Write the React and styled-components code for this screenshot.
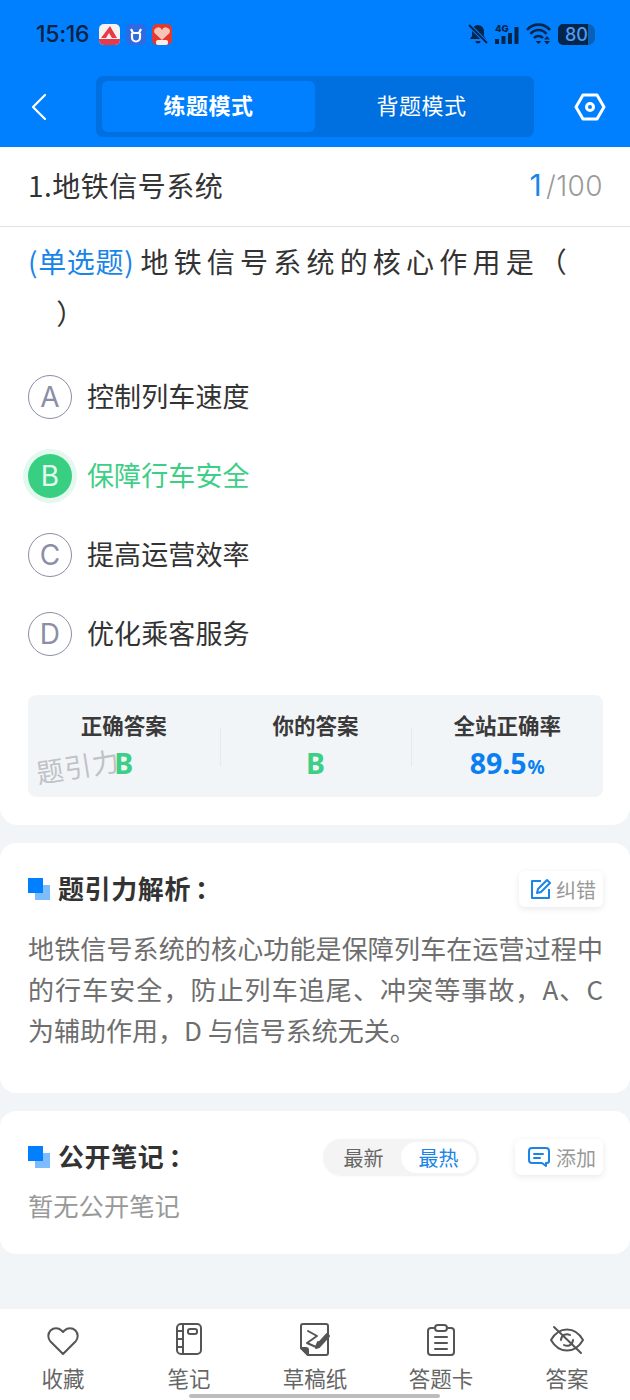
import React from 'react';
import styled, { createGlobalStyle } from 'styled-components';

const Global = createGlobalStyle`
  html, body { margin: 0; padding: 0; background: #f2f5f8; }
  * { box-sizing: border-box; }
  body { font-family: "Noto Sans CJK SC", "Noto Sans", sans-serif; }
`;
const Page = styled.div`
  position: relative; width: 630px; height: 1400px; display: flex; flex-direction: column; overflow: hidden; background: #f2f5f8;
`;
const Header = styled.header`
  height: 147px; background: #0080ff; display: flex; flex-direction: column; flex: none;
`;
const StatusBar = styled.div`
  height: 76px; padding: 19px 35px 0 36px; display: flex; align-items: flex-start; justify-content: space-between;
`;
const StatusSide = styled.div`
  display: flex; align-items: center; gap: ${p => p.$gap || 6}px; height: 30px;
`;
const Time = styled.span`
  font: 500 23px/30px Inter, "Noto Sans", sans-serif; color: #0b2140; margin-right: 4px; letter-spacing: -0.3px;
`;
const Battery = styled.div`
  width: 37px; height: 21px; border-radius: 5px 7px 7px 5px; background: linear-gradient(90deg, #06254b 0, #06254b 81%, #0a5fb8 81%); color: #4d9df0; font: 500 18px/21px Inter, sans-serif; padding-left: 7px; margin-left: -1px;
`;
const Nav = styled.div`
  height: 61px; padding: 0 24px 0 30px; display: flex; align-items: center; justify-content: space-between;
`;
const Segment = styled.div`
  width: 438px; height: 61px; margin-left: 6px; padding: 5px 6px; display: flex; background: #006fe0; border-radius: 7px;
`;
const SegmentItem = styled.div`
  flex: 1; border-radius: 6px; display: flex; align-items: center; justify-content: center; padding-bottom: 5px; color: #fff; font-size: 22px; letter-spacing: 0.5px; font-weight: ${p => p.$active ? 700 : 400}; background: ${p => p.$active ? '#0080ff' : 'transparent'};
`;
const QuestionCard = styled.section`
  background: #fff; border-radius: 0 0 18px 18px; height: 678px; flex: none; display: flex; flex-direction: column;
`;
const TitleRow = styled.div`
  height: 80px; flex: none; padding: 0 27px 3px 28px; border-bottom: 1px solid #e1e1e1; display: flex; align-items: center; justify-content: space-between;
`;
const Title = styled.h1`
  margin: 0; font-size: 28px; font-weight: 400; color: #333; line-height: 1; letter-spacing: 0.5px;
`;
const Counter = styled.div`
  display: flex; align-items: baseline; color: #9a9a9a; font: 300 28px/1 Inter, "Noto Sans", sans-serif; letter-spacing: 0.4px;
`;
const CounterNow = styled.span`
  color: #1a85e8; font-size: 30px; font-weight: 400; margin-right: 4px;
`;
const Question = styled.div`
  width: 560px; margin: 8px 0 0 28px; font-size: 28px; line-height: 52px; color: #333; letter-spacing: 5.200px;
`;
const QuestionTag = styled.span`
  color: #1a85e8; letter-spacing: 0.7px; margin-right: 6px;
`;
const ClosingParen = styled.span`
  margin-left: -5px;
`;
const Options = styled.div`
  margin-top: 36px; padding-left: 28px; display: flex; flex-direction: column; gap: 35px;
`;
const Option = styled.div`
  height: 44px; display: flex; align-items: center; gap: 15px; font-size: 27px; letter-spacing: 0.1px; color: ${p => p.$selected ? '#3ecf87' : '#333'};
`;
const OptionText = styled.span`
  margin-top: -4px;
`;
const OptionMark = styled.div`
  width: 44px; height: 44px; border-radius: 50%; display: flex; align-items: center; justify-content: center; font: 400 28px/1 Inter, sans-serif;
  border: ${p => p.$selected ? '0' : '1px solid #8b8ea6'};
  color: ${p => p.$selected ? '#e6f9ef' : '#8b8ea6'};
  background: ${p => p.$selected ? '#38cf83' : 'transparent'};
  box-shadow: ${p => p.$selected ? '0 0 0 5px #e3f8ee' : 'none'};
`;
const Stats = styled.div`
  position: relative; margin: 39px 27px 0 28px; height: 102px; background: #f2f5f8; border-radius: 8px; display: flex; align-items: center;
`;
const Stat = styled.div`
  position: relative; flex: 1; height: 76px; display: flex; flex-direction: column; align-items: center; justify-content: space-between;
  & + &::before { content: ""; position: absolute; left: 0; top: 20px; height: 38px; width: 1px; background: #e6e9ed; }
`;
const StatLabel = styled.div`
  font-size: 21.500px; font-weight: 700; color: #3a3a3a; line-height: 28px; margin-top: 3px;
`;
const StatValue = styled.div`
  font: 700 28.500px/36px "Noto Sans", Inter, sans-serif; color: ${p => p.$blue ? '#0a80f0' : '#3ccf85'}; margin-bottom: 3px;
`;
const StatUnit = styled.span`
  font-size: 19px; line-height: 1; margin-left: 1px;
`;
const Watermark = styled.div`
  position: absolute; left: 8px; top: 54px; font-size: 27px; line-height: 34px; color: #bfc2c6; transform: rotate(-9deg); letter-spacing: 1px; white-space: nowrap;
`;
const Card = styled.section`
  background: #fff; border-radius: 16px; margin-top: 18px; flex: none; height: ${p => p.$h}px; padding: 28px 27px 0 28px;
`;
const CardHead = styled.div`
  height: 36px; display: flex; align-items: center;
`;
const SquareIcon = styled.div`
  position: relative; width: 22px; height: 22px; margin-right: 8px; flex: none;
  &::before { content: ""; position: absolute; right: 0; bottom: 0; width: 15px; height: 15px; background: #7dbdff; }
  &::after { content: ""; position: absolute; left: 0; top: 0; width: 15px; height: 15px; background: #0080ff; }
`;
const CardTitle = styled.h2`
  margin: 0 0 3px; font-size: 26px; font-weight: 700; color: #333; letter-spacing: 0.6px; line-height: 36px; flex: 1;
`;
const Colon = styled.span`
  margin-left: 4px;
`;
const Chip = styled.div`
  height: 36px; padding: 0 7px 0 ${p => p.$pl || 11}px; margin-left: ${p => p.$ml || 0}px; background: #fff; border-radius: 6px; display: flex; align-items: center; gap: ${p => p.$gap || 4}px; font-size: 20px; color: #999; box-shadow: 0 2px 7px rgba(0,0,0,.09);
`;
const Analysis = styled.p`
  margin: 20px 0 0; width: 575px; font-size: 26px; line-height: 41px; color: #6e6e6e; text-align: justify;
`;
const Toggle = styled.div`
  width: 156px; height: 37px; padding: 3px; border-radius: 19px; background: #f4f4f4; display: flex; align-items: center; font-size: 20px; box-shadow: 0 0 3px rgba(0,0,0,.04);
`;
const ToggleItem = styled.div`
  flex: 1; height: 31px; border-radius: 16px; display: flex; align-items: center; justify-content: center; color: ${p => p.$active ? '#1a85e8' : '#666'}; background: ${p => p.$active ? '#fff' : 'transparent'};
`;
const Empty = styled.div`
  margin-top: 12px; font-size: 25.300px; line-height: 36px; color: #999;
`;
const TabBar = styled.nav`
  position: absolute; left: 0; right: 0; bottom: 0; height: 91px; background: #fff; display: grid; grid-template-columns: repeat(5, 1fr); padding: 14px 0 0;
`;
const Tab = styled.div`
  display: flex; flex-direction: column; align-items: center; color: #666; font-size: 21.500px; line-height: 30px; gap: 4px;
`;
const TabIcon = styled.svg`
  width: 36px; height: 36px; fill: none; stroke: #555; stroke-width: 2; stroke-linecap: round; stroke-linejoin: round;
`;
const HomeBar = styled.div`
  position: absolute; left: 189px; bottom: 2px; width: 251px; height: 4px; border-radius: 2px; background: #bdbdbd;
`;

export default function App() {
  return (
    <Page>
      <Global />
      <Header>
        <StatusBar>
          <StatusSide>
            <Time>15:16</Time>
            <svg width="21" height="21" viewBox="0 0 21 21"><rect width="21" height="21" rx="5" fill="#f6f2f2"/><path d="M0 15h21v1a5 5 0 0 1-5 5H5a5 5 0 0 1-5-5z" fill="#e8394a"/><path d="M2 14 11 2l7 12h-5l-3-5-3 5z" fill="#e8394a"/></svg>
            <svg width="20" height="21" viewBox="0 0 20 21"><rect width="20" height="21" rx="5" fill="#2f6ae0"/><path d="M6 9v4.500a4 4 0 0 0 8 0V9M5 5l2 4h6l2-4" fill="none" stroke="#fff" strokeWidth="2.200"/></svg>
            <svg width="20" height="21" viewBox="0 0 20 21"><rect width="20" height="21" rx="5" fill="#e23a30"/><path d="M10 16 2.500 9a4 4 0 0 1 7.500-3 4 4 0 0 1 7.500 3z" fill="#f7c3b5"/><rect x="4" y="16" width="12" height="5" rx="2" fill="#fbeee8"/></svg>
          </StatusSide>
          <StatusSide $gap={7}>
            <svg width="20" height="22" viewBox="0 0 20 22"><path d="M10 2a6 6 0 0 0-6 6v5l-2 3h16l-2-3V8a6 6 0 0 0-6-6zM7.500 18h5a2.500 2.500 0 0 1-5 0z" fill="#06254b"/><path d="m1 2 18 18" stroke="#0080ff" strokeWidth="4"/><path d="m1 2 18 18" stroke="#06254b" strokeWidth="2"/></svg>
            <svg width="24" height="22" viewBox="0 0 24 22"><text x="0" y="8.500" fontSize="9.500" fontWeight="800" fontFamily="Inter" fill="#06254b">4G</text><path d="M0 16h4v5H0zM6.500 13h4v8h-4zM13 10h4v11h-4zM19.500 4h4v17h-4z" fill="#06254b"/></svg>
            <svg width="26" height="22" viewBox="0 0 26 22"><path d="M1 7a15 15 0 0 1 23 0M4.500 11a10 10 0 0 1 16 0M8 15a6 6 0 0 1 9 0" fill="none" stroke="#06254b" strokeWidth="2.600"/><path d="m12.500 21-3-3h6zM21 13l3 3.500h-6zM21 21.500l3-3.500h-6z" fill="#06254b"/></svg>
            <Battery>80</Battery>
          </StatusSide>
        </StatusBar>
        <Nav>
          <svg width="20" height="30" viewBox="0 0 20 30" fill="none" stroke="#fff" strokeWidth="2.200" strokeLinecap="round" strokeLinejoin="round"><path d="M15 3 3 15l12 12"/></svg>
          <Segment>
            <SegmentItem $active>练题模式</SegmentItem>
            <SegmentItem>背题模式</SegmentItem>
          </Segment>
          <svg width="32" height="28" viewBox="0 0 32 28" fill="none" stroke="#fff" strokeWidth="3" strokeLinejoin="round"><path d="M9 2h14l7 12-7 12H9L2 14z"/><circle cx="16" cy="14" r="3.500"/></svg>
        </Nav>
      </Header>
      <QuestionCard>
        <TitleRow>
          <Title>1.地铁信号系统</Title>
          <Counter><CounterNow>1</CounterNow>/100</Counter>
        </TitleRow>
        <Question><QuestionTag>(单选题)</QuestionTag>地铁信号系统的核心作用是（<br /><ClosingParen>　）</ClosingParen></Question>
        <Options>
          <Option><OptionMark>A</OptionMark><OptionText>控制列车速度</OptionText></Option>
          <Option $selected><OptionMark $selected>B</OptionMark><OptionText>保障行车安全</OptionText></Option>
          <Option><OptionMark>C</OptionMark><OptionText>提高运营效率</OptionText></Option>
          <Option><OptionMark>D</OptionMark><OptionText>优化乘客服务</OptionText></Option>
        </Options>
        <Stats>
          <Stat><StatLabel>正确答案</StatLabel><StatValue>B</StatValue></Stat>
          <Stat><StatLabel>你的答案</StatLabel><StatValue>B</StatValue></Stat>
          <Stat><StatLabel>全站正确率</StatLabel><StatValue $blue>89.5<StatUnit>%</StatUnit></StatValue></Stat>
          <Watermark>题引力</Watermark>
        </Stats>
      </QuestionCard>
      <Card $h={250}>
        <CardHead>
          <SquareIcon />
          <CardTitle>题引力解析<Colon>：</Colon></CardTitle>
          <Chip>
            <svg width="22" height="22" viewBox="0 0 22 22" fill="none" stroke="#1a85e8" strokeWidth="2" strokeLinejoin="round"><path d="M11 3H2v17h17v-9"/><path d="m8 11 9-9 3 3-9 9-4 1z"/></svg>
            纠错
          </Chip>
        </CardHead>
        <Analysis>地铁信号系统的核心功能是保障列车在运营过程中的行车安全，防止列车追尾、冲突等事故，A、C 为辅助作用，D 与信号系统无关。</Analysis>
      </Card>
      <Card $h={143}>
        <CardHead>
          <SquareIcon />
          <CardTitle>公开笔记<Colon>：</Colon></CardTitle>
          <Toggle>
            <ToggleItem>最新</ToggleItem>
            <ToggleItem $active>最热</ToggleItem>
          </Toggle>
          <Chip $ml={36} $pl={13} $gap={6}>
            <svg width="22" height="22" viewBox="0 0 22 22" fill="none" stroke="#1a85e8" strokeWidth="2" strokeLinejoin="round" strokeLinecap="round"><path d="M4 2h14a3 3 0 0 1 3 3v10a2 2 0 0 1-2 2h-1v3l-4-3H4a3 3 0 0 1-3-3V5a3 3 0 0 1 3-3z"/><path d="M6 8h9M6 12h6"/></svg>
            添加
          </Chip>
        </CardHead>
        <Empty>暂无公开笔记</Empty>
      </Card>
      <TabBar>
        <Tab>
          <TabIcon viewBox="0 0 36 36"><path d="M18 31 5.500 18.500a8 8 0 0 1 0-11 8 8 0 0 1 11 0L18 9l1.500-1.500a8 8 0 0 1 11 0 8 8 0 0 1 0 11z"/></TabIcon>
          收藏
        </Tab>
        <Tab>
          <TabIcon viewBox="0 0 36 36"><rect x="6" y="1" width="24" height="30" rx="4"/><path d="M12 1v30M6 8h6M6 16h6M6 24h6"/><rect x="17" y="6" width="9" height="5" rx="2"/></TabIcon>
          笔记
        </Tab>
        <Tab>
          <TabIcon viewBox="0 0 36 36"><path d="M11 32h18a2 2 0 0 0 2-2V3a2 2 0 0 0-2-2H6a2 2 0 0 0-2 2v22z"/><path d="M4 25h5a2 2 0 0 1 2 2v5z" fill="#555"/><path d="m11 8 9 5-10 7 9 4 2-5"/><path d="m20 22 10-11 2 2-10 11-3 1z" fill="#555"/></TabIcon>
          草稿纸
        </Tab>
        <Tab>
          <TabIcon viewBox="0 0 36 36"><path d="M11 5H8a3 3 0 0 0-3 3v21a3 3 0 0 0 3 3h20a3 3 0 0 0 3-3V8a3 3 0 0 0-3-3h-3"/><rect x="12" y="2" width="12" height="6" rx="3"/><path d="M12 14h12M12 20h12M12 26h12"/></TabIcon>
          答题卡
        </Tab>
        <Tab>
          <TabIcon viewBox="0 0 36 36"><path d="M2 17c4-7 10-10.500 16-10.500S30 10 34 17c-4 7-10 10.500-16 10.500S6 24 2 17z"/><path d="M24 17a6 6 0 0 1-9 5M12 17a6 6 0 0 1 9-5"/><path d="m5 4 27 26"/></TabIcon>
          答案
        </Tab>
      </TabBar>
      <HomeBar />
    </Page>
  );
}
